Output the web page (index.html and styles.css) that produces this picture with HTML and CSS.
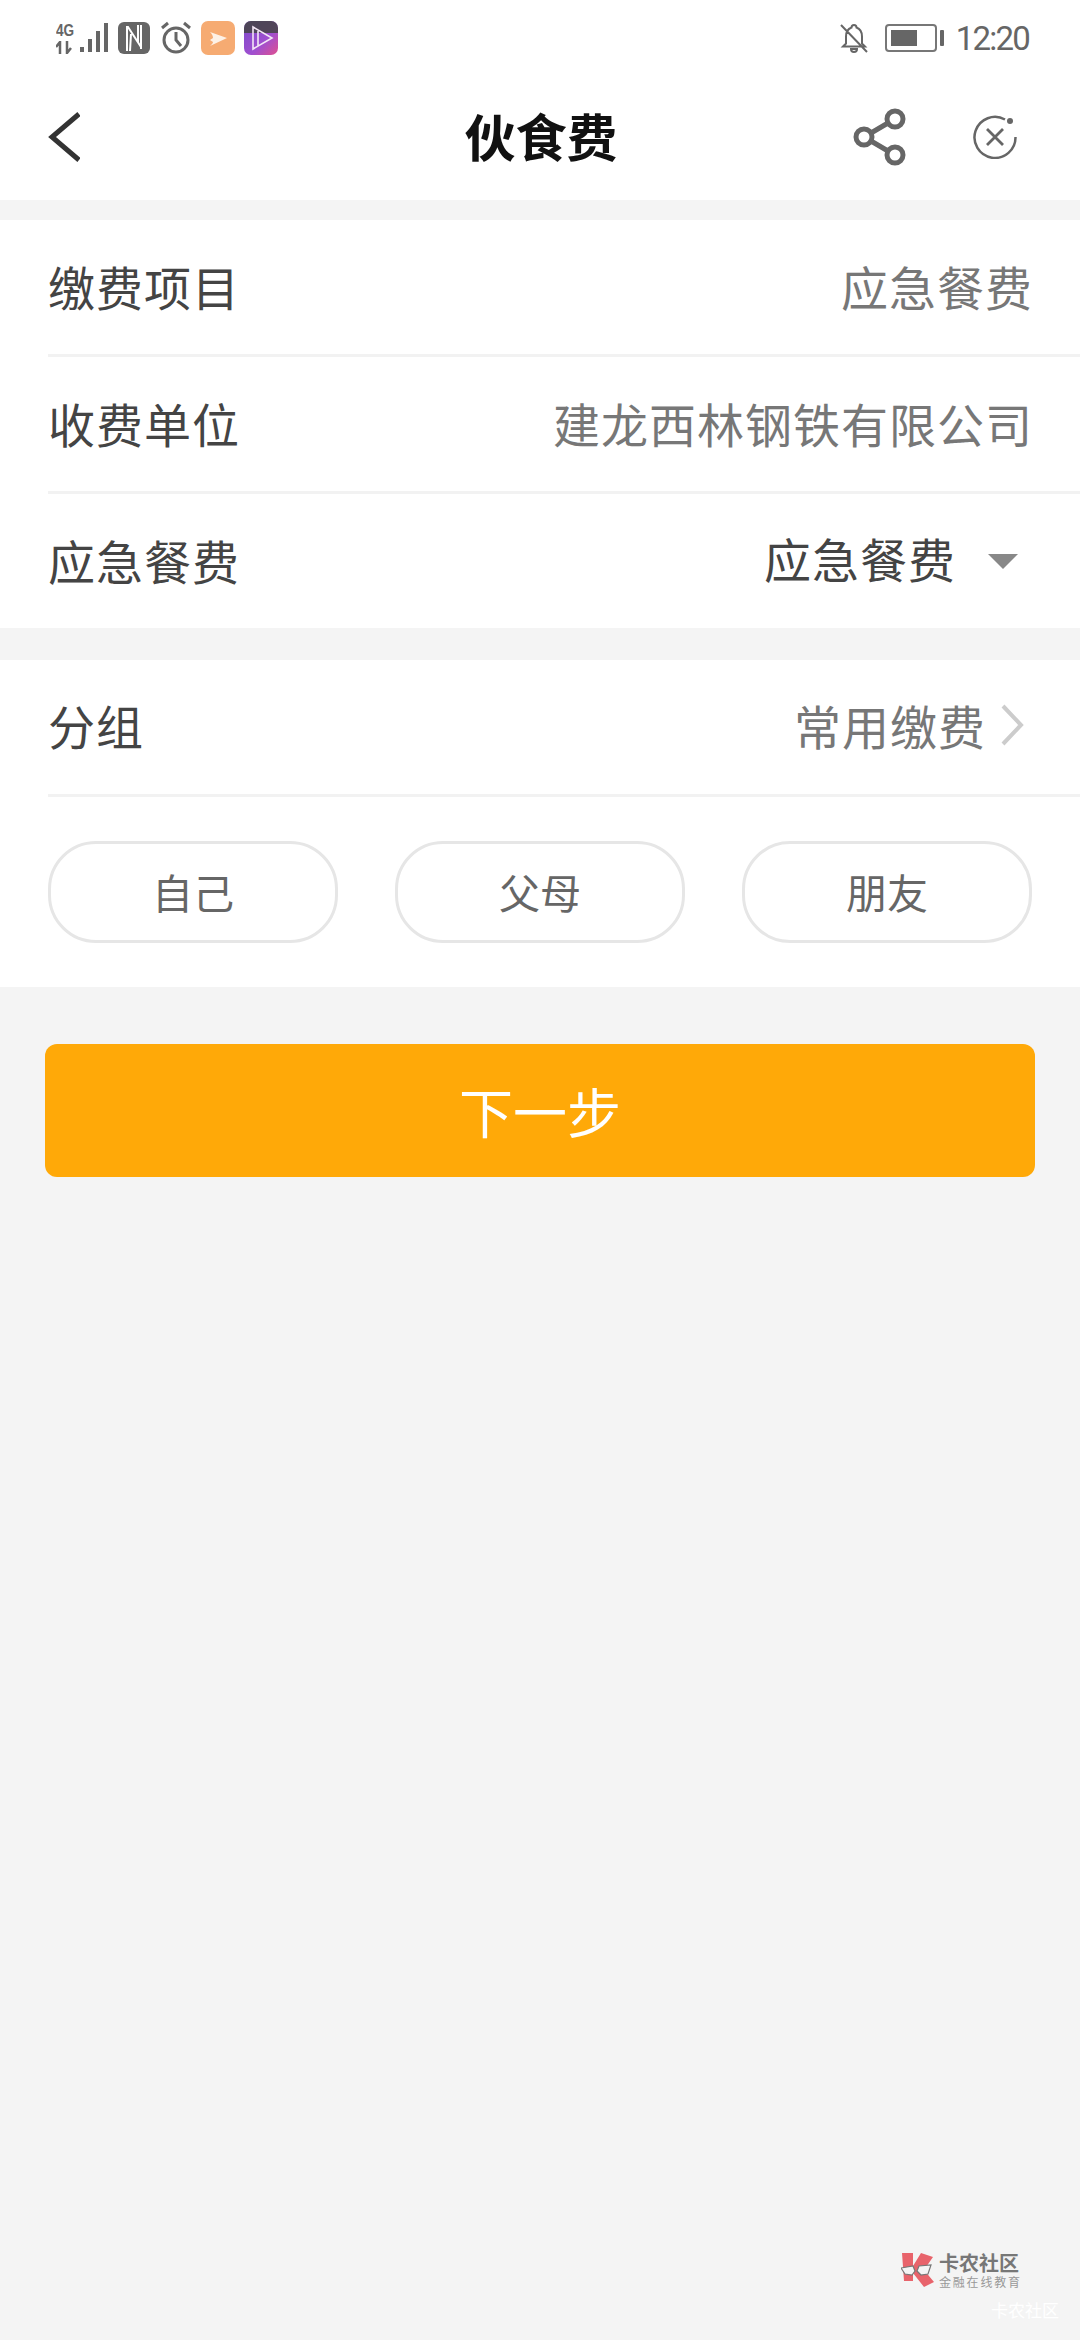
FILE: index.html
```html
<!DOCTYPE html>
<html lang="zh-CN">
<head>
    <meta charset="UTF-8">
    <meta name="viewport" content="width=device-width, initial-scale=1.0">
    <title>伙食费</title>
    <link rel="stylesheet" href="styles.css">
</head>
<body>

    <div class="top-area">
        <div class="status-bar">
            <div class="status-left">
                <div class="signal">
                    <div class="net-label">
                        <span>4G</span>
                        <svg width="16" height="13" viewBox="0 0 16 13"><path d="M4 13V1L0 6M11 0v12l4-5" fill="none" stroke="#666" stroke-width="2.500"/></svg>
                    </div>
                    <svg width="28" height="32" viewBox="0 0 28 32"><g fill="#666"><rect x="0" y="25" width="4" height="5"/><rect x="8" y="17" width="4" height="13"/><rect x="16" y="9" width="4" height="21"/><rect x="24" y="1" width="4" height="29"/></g></svg>
                </div>
                <svg width="32" height="32" viewBox="0 0 32 32"><rect width="32" height="32" rx="6" fill="#666"/><path d="M9 29V5l1 0 13 20M23 3v24M13 12l-1 17M20 20l0-17" fill="none" stroke="#fff" stroke-width="2"/></svg>
                <svg width="32" height="34" viewBox="0 0 32 34"><circle cx="16" cy="19" r="12" fill="none" stroke="#666" stroke-width="3"/><path d="M16 11v8l5 6M2 7l6-5M30 7l-6-5" fill="none" stroke="#666" stroke-width="3"/></svg>
                <svg class="app-icon" width="34" height="34" viewBox="0 0 34 34"><rect width="34" height="34" rx="7" fill="#f6ab72"/><path d="M9 11l17 6-17 8c2-2 3-3 3-4l-3-2 3-2c0-2-1-4-3-6z" fill="#fdf1e6"/></svg>
                <svg class="app-icon" width="34" height="34" viewBox="0 0 34 34">
                    <defs><linearGradient id="appGrad" x1="0" y1="0" x2="1" y2="1"><stop offset="0" stop-color="#7a4bc9"/><stop offset="0.6" stop-color="#a04fd0"/><stop offset="1" stop-color="#e0508f"/></linearGradient></defs>
                    <rect width="34" height="34" rx="7" fill="url(#appGrad)"/>
                    <path d="M0 7a7 7 0 0 1 7-7h20a7 7 0 0 1 7 7v5H0z" fill="#444" opacity="0.85"/>
                    <path d="M9 6l19 11-19 11zM14 10v15" fill="none" stroke="#f3e6f5" stroke-width="1.600"/>
                </svg>
            </div>
            <div class="status-right">
                <svg width="28" height="32" viewBox="0 0 28 32"><path d="M14 3a2.500 2.500 0 0 1 2.500 2.500c4 1.500 5.500 5 5.500 9v7l3 3H3l3-3v-7c0-4 1.500-7.500 5.500-9A2.500 2.500 0 0 1 14 3zM11 27h6a3 3 0 0 1-6 0zM1 3l26 27" fill="none" stroke="#666" stroke-width="2"/></svg>
                <div class="battery"><div class="battery-body"><div class="battery-level"></div></div><div class="battery-cap"></div></div>
                <span class="clock">12:20</span>
            </div>
        </div>

        <div class="title-bar">
            <svg class="back-icon" width="32" height="50" viewBox="0 0 32 50"><path d="M31 2L4 25l27 23" fill="none" stroke="#333" stroke-width="5"/></svg>
            <h1>伙食费</h1>
            <div class="title-actions">
                <svg width="54" height="58" viewBox="0 0 54 58"><g fill="none" stroke="#666" stroke-width="5"><circle cx="42" cy="11" r="8"/><circle cx="11" cy="29" r="8"/><circle cx="42" cy="47" r="8"/><path d="M18 25l17-10M18 33l17 10"/></g></svg>
                <svg width="44" height="44" viewBox="0 0 44 44"><path d="M32 4.500A20.500 20.500 0 1 0 42.500 22" fill="none" stroke="#666" stroke-width="2.500"/><circle cx="37" cy="6" r="3" fill="#666"/><path d="M14 14l16 16M30 14L14 30" stroke="#666" stroke-width="2.800"/></svg>
            </div>
        </div>
    </div>

    <div class="section section-fee">
        <div class="row">
            <span class="row-label">缴费项目</span>
            <span class="row-value">应急餐费</span>
        </div>
        <div class="row">
            <span class="row-label">收费单位</span>
            <span class="row-value">建龙西林钢铁有限公司</span>
        </div>
        <div class="row row-last">
            <span class="row-label">应急餐费</span>
            <span class="row-select">应急餐费<i class="caret"></i></span>
        </div>
    </div>

    <div class="section section-group">
        <div class="row row-group">
            <span class="row-label">分组</span>
            <span class="row-value">常用缴费
                <svg class="chevron" width="24" height="42" viewBox="0 0 24 42"><path d="M3 2l18 19L3 40" fill="none" stroke="#ccc" stroke-width="4"/></svg>
            </span>
        </div>
        <div class="pills">
            <div class="pill">自己</div>
            <div class="pill">父母</div>
            <div class="pill">朋友</div>
        </div>
    </div>

    <button class="next-btn">下一步</button>

    <div class="watermark">
        <svg width="34" height="36" viewBox="0 0 34 36"><path d="M1 1h11v13L20 1l12 4-9 13 10 12-10 5-11-14v8H3z" fill="#e8636b"/><g fill="#f4f4f4" stroke="#777" stroke-width="1.200"><path d="M0 16l12-2 2 5-3 4-7-1z"/><path d="M16 19l2-5 12-1-3 9-7 1z"/></g></svg>
        <div class="mark-text">
            <div class="mark-name">卡农社区</div>
            <div class="mark-sub">金融在线教育</div>
        </div>
        <div class="mark-ghost">卡农社区</div>
    </div>

</body>
</html>
```

FILE: styles.css
```css
* {
    box-sizing: border-box;
}

html, body {
    height: 100%;
}

body {
    margin: 0;
    min-height: 2340px;
    position: relative;
    overflow: hidden;
    background-color: #f4f4f4;
    font-family: "Noto Sans CJK SC", "Liberation Sans", sans-serif;
    color: #444;
}

.top-area {
    height: 200px;
    background-color: #fff;
}

.status-bar {
    height: 76px;
    padding: 18px 51px 0 56px;
    display: flex;
    justify-content: space-between;
    align-items: flex-start;
}

.status-left {
    display: flex;
    align-items: center;
    gap: 10px;
    height: 40px;
}

.signal {
    display: flex;
    align-items: flex-end;
    gap: 8px;
    width: 52px;
}

.net-label {
    display: flex;
    flex-direction: column;
    gap: 2px;
    width: 16px;
    font-family: "Liberation Sans", sans-serif;
    font-size: 16px;
    line-height: 16px;
    font-weight: 700;
    color: #666;
    white-space: nowrap;
}

.net-label span {
    transform: scaleX(0.85);
    transform-origin: left;
}

.app-icon {
    margin-left: -1px;
}

.status-right {
    display: flex;
    align-items: center;
    height: 40px;
}

.battery {
    display: flex;
    align-items: center;
    gap: 3px;
    margin-left: 17px;
}

.battery-body {
    width: 52px;
    height: 28px;
    padding: 4px;
    border: 2px solid #777;
    border-radius: 4px;
}

.battery-level {
    width: 26px;
    height: 100%;
    background-color: #666;
}

.battery-cap {
    width: 4px;
    height: 16px;
    background-color: #666;
    border-radius: 1px;
}

.clock {
    margin-left: 12px;
    font-family: Roboto, sans-serif;
    font-size: 33px;
    letter-spacing: -1.800px;
    color: #666;
}

.title-bar {
    height: 124px;
    padding: 0 63px 2px 48px;
    position: relative;
    display: flex;
    justify-content: space-between;
    align-items: center;
}

.title-bar h1 {
    position: absolute;
    left: 2px;
    right: 0;
    top: 23px;
    margin: 0;
    text-align: center;
    font-size: 51px;
    line-height: 72px;
    font-weight: 700;
    color: #111;
}

.title-actions {
    display: flex;
    align-items: center;
    gap: 66px;
}

.section {
    background-color: #fff;
    padding-left: 48px;
}

.section-fee {
    margin-top: 20px;
}

.section-group {
    margin-top: 32px;
}

.row {
    height: 137px;
    padding: 0 47px 4px 0;
    display: flex;
    justify-content: space-between;
    align-items: center;
    border-bottom: 3px solid #f2f2f2;
    font-size: 47px;
    letter-spacing: 1px;
}

.row-last {
    height: 134px;
    border-bottom: none;
}

.row-group {
    height: 137px;
    padding-bottom: 5px;
}

.row-label {
    color: #444;
}

.row-value {
    display: flex;
    align-items: center;
    color: #777;
}

.row-select {
    display: flex;
    align-items: center;
    margin-top: -3px;
    color: #444;
}

.caret {
    width: 0;
    height: 0;
    margin: 8px 15px 0 32px;
    border-left: 15px solid transparent;
    border-right: 15px solid transparent;
    border-top: 15px solid #888;
}

.chevron {
    margin-left: 14px;
    margin-right: 9px;
}

.pills {
    display: flex;
    justify-content: space-between;
    padding: 44px 48px 44px 0;
}

.pill {
    width: 290px;
    height: 102px;
    padding-bottom: 3px;
    border: 3px solid #e6e6e6;
    border-radius: 48px;
    display: flex;
    justify-content: center;
    align-items: center;
    font-size: 41px;
    color: #666;
}

.next-btn {
    display: block;
    width: 990px;
    height: 133px;
    margin: 57px 0 0 45px;
    border: none;
    border-radius: 12px;
    background-color: #ffa908;
    color: #fff;
    font-family: inherit;
    font-size: 54px;
}

.watermark {
    position: absolute;
    left: 901px;
    top: 2252px;
    display: flex;
    gap: 4px;
}

.mark-text {
    font-weight: 700;
    color: #777;
}

.mark-name {
    font-size: 20px;
    line-height: 22px;
    white-space: nowrap;
}

.mark-sub {
    font-size: 12px;
    line-height: 16px;
    letter-spacing: 1.800px;
    font-weight: 400;
    color: #999;
    white-space: nowrap;
}

.mark-ghost {
    position: absolute;
    left: 90px;
    top: 45px;
    font-size: 17px;
    color: #fff;
    white-space: nowrap;
}
```
